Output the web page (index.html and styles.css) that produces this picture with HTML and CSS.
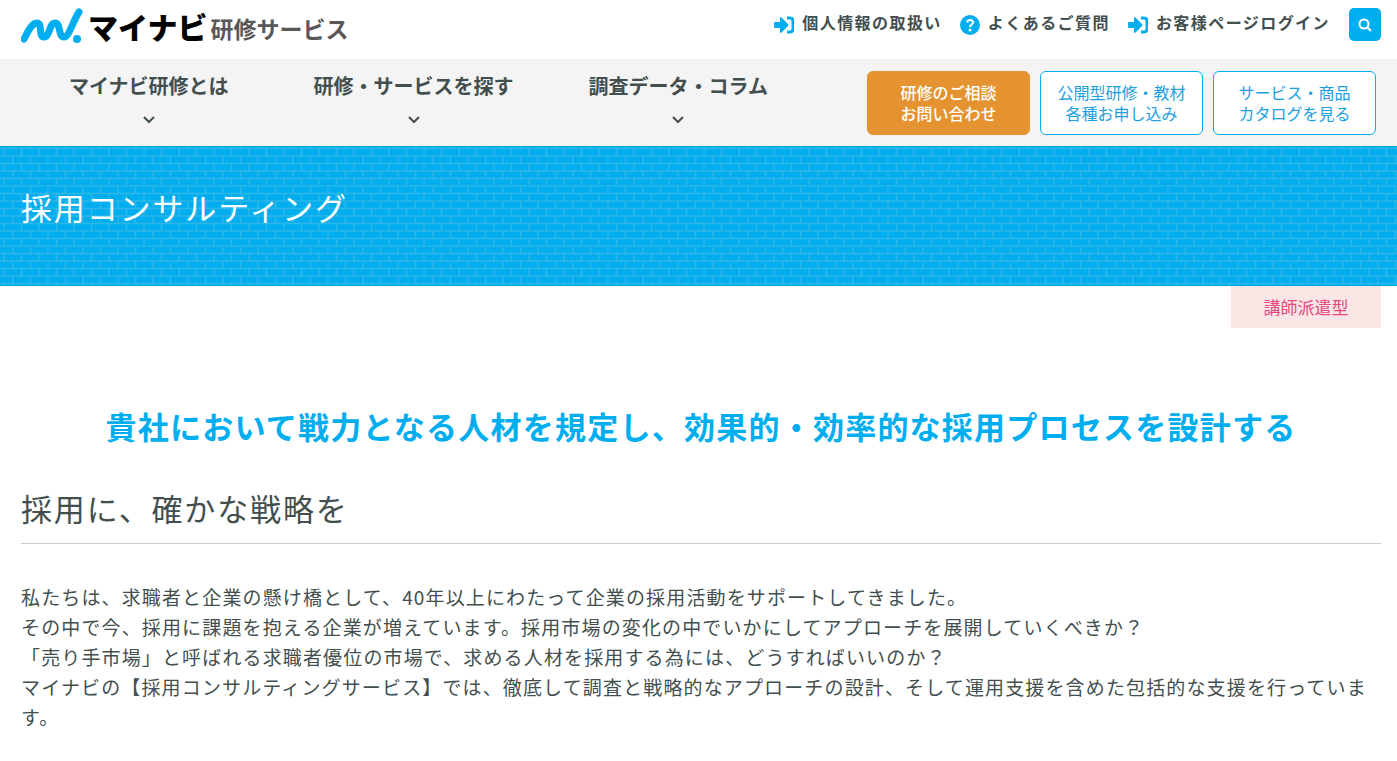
FILE: index.html
```html
<!DOCTYPE html>
<html lang="ja">
<head>
  <meta charset="UTF-8">
  <meta name="viewport" content="width=device-width, initial-scale=1.0">
  <title>採用コンサルティング | マイナビ研修サービス</title>
  <link rel="stylesheet" href="styles.css">
</head>
<body>
  <header>
    <div class="header-top">
      <a class="logo" href="#">
        <svg class="logo-mark" viewBox="0 0 62 36" aria-hidden="true">
          <path d="M3 31C7 23 11 15 16 15C22 15 17 29 23 29C29 29 28 15 34 15C40 15 37 29 43 29C48 29 51 15 58 4" />
          <circle cx="56" cy="31" r="4" />
        </svg>
        <span class="logo-name">マイナビ</span>
        <span class="logo-service">研修サービス</span>
      </a>
      <ul class="sub-links">
        <li><a href="#">
          <svg class="icon" viewBox="0 0 20 20" aria-hidden="true"><path class="fill" d="M0 8q0-1 1-1h5V3q0-1 1-1l7 7q1 1 0 2l-7 7q-1 0-1-1v-4H1q-1 0-1-1z" /><path class="line" d="M13 3h3q3 0 3 3v8q0 3-3 3h-3" /></svg>
          個人情報の取扱い</a></li>
        <li><a href="#">
          <svg class="icon" viewBox="0 0 20 20" aria-hidden="true"><circle class="fill" cx="10" cy="10" r="10" /><path class="mark" d="M7 7.500C7.500 4 13 4 13 7.500C13 9.500 10 9.500 10 12" /><circle class="mark-dot" cx="10" cy="15" r="1.500" /></svg>
          よくあるご質問</a></li>
        <li><a href="#">
          <svg class="icon" viewBox="0 0 20 20" aria-hidden="true"><path class="fill" d="M0 8q0-1 1-1h5V3q0-1 1-1l7 7q1 1 0 2l-7 7q-1 0-1-1v-4H1q-1 0-1-1z" /><path class="line" d="M13 3h3q3 0 3 3v8q0 3-3 3h-3" /></svg>
          お客様ページログイン</a></li>
      </ul>
      <button class="search-btn" type="button" aria-label="検索">
        <svg viewBox="0 0 14 14" aria-hidden="true"><circle cx="6" cy="6" r="4.500" /><path d="M9 9l4 4" /></svg>
      </button>
    </div>
    <div class="header-nav">
      <nav>
        <ul class="nav-list">
          <li><a href="#">マイナビ研修とは<svg viewBox="0 0 12 8" aria-hidden="true"><path d="M1 1l5 5 5-5" /></svg></a></li>
          <li><a href="#">研修・サービスを探す<svg viewBox="0 0 12 8" aria-hidden="true"><path d="M1 1l5 5 5-5" /></svg></a></li>
          <li><a href="#">調査データ・コラム<svg viewBox="0 0 12 8" aria-hidden="true"><path d="M1 1l5 5 5-5" /></svg></a></li>
        </ul>
      </nav>
      <div class="nav-buttons">
        <a class="btn btn-orange" href="#">研修のご相談<br>お問い合わせ</a>
        <a class="btn" href="#">公開型研修・教材<br>各種お申し込み</a>
        <a class="btn" href="#">サービス・商品<br>カタログを見る</a>
      </div>
    </div>
  </header>

  <div class="page-title">
    <h1>採用コンサルティング</h1>
  </div>

  <main>
    <p class="tag">講師派遣型</p>
    <p class="catch">貴社において戦力となる人材を規定し、効果的・効率的な採用プロセスを設計する</p>
    <h2>採用に、確かな戦略を</h2>
    <p class="text">私たちは、求職者と企業の懸け橋として、40年以上にわたって企業の採用活動をサポートしてきました。<br>
      その中で今、採用に課題を抱える企業が増えています。採用市場の変化の中でいかにしてアプローチを展開していくべきか？<br>
      「売り手市場」と呼ばれる求職者優位の市場で、求める人材を採用する為には、どうすればいいのか？<br>
      マイナビの【採用コンサルティングサービス】では、徹底して調査と戦略的なアプローチの設計、そして運用支援を含めた包括的な支援を行っています。</p>
  </main>
</body>
</html>
```
FILE: styles.css
```css
* {
  box-sizing: border-box;
}
body {
  margin: 0;
  font-family: "Noto Sans CJK JP", sans-serif;
  color: #434f4f;
  background: #fff;
}
a {
  color: inherit;
  text-decoration: none;
}
ul {
  list-style: none;
  margin: 0;
  padding: 0;
}
h1, h2, p {
  margin: 0;
}

/* header */
.header-top {
  display: flex;
  align-items: flex-start;
  height: 59px;
  padding: 8px 16px 0 21px;
}
.logo {
  display: flex;
  align-items: center;
  height: 36px;
  margin-right: auto;
  white-space: nowrap;
}
.logo-mark {
  width: 62px;
  height: 36px;
  margin-right: 5px;
}
.logo-mark path {
  fill: none;
  stroke: #00aeef;
  stroke-width: 7;
  stroke-linecap: round;
}
.logo-mark circle {
  fill: #00aeef;
}
.logo-name {
  font-size: 30px;
  font-weight: 900;
  color: #000;
}
.logo-service {
  margin-left: 3px;
  padding-top: 4px;
  font-size: 23px;
  font-weight: 700;
  color: #595757;
}
.sub-links {
  display: flex;
  gap: 18px;
  margin-right: 19px;
}
.sub-links a {
  display: flex;
  align-items: center;
  gap: 8px;
  height: 28px;
  font-size: 16px;
  font-weight: 700;
  letter-spacing: 0.09em;
  white-space: nowrap;
}
.icon {
  width: 20px;
  height: 20px;
  margin-top: 6px;
}
.icon .fill {
  fill: #00aeef;
}
.icon .line {
  fill: none;
  stroke: #00aeef;
  stroke-width: 3;
}
.icon .mark {
  fill: none;
  stroke: #fff;
  stroke-width: 2;
}
.icon .mark-dot {
  fill: #fff;
}
.search-btn {
  display: flex;
  align-items: center;
  justify-content: center;
  width: 32px;
  height: 33px;
  padding: 0;
  border: none;
  border-radius: 5px;
  background: #00aeef;
  cursor: pointer;
}
.search-btn svg {
  width: 14px;
  height: 14px;
  fill: none;
  stroke: #fff;
  stroke-width: 2;
}
.header-nav {
  display: flex;
  justify-content: space-between;
  padding: 12px 21px 11px 69px;
  background: #f4f4f4;
}
.nav-list {
  display: flex;
}
.nav-list li {
  margin-right: 75px;
}
.nav-list li:first-child {
  margin-right: 85px;
}
.nav-list a {
  display: flex;
  flex-direction: column;
  align-items: center;
  font-size: 20px;
  font-weight: 700;
  line-height: 30px;
  white-space: nowrap;
}
.nav-list svg {
  width: 12px;
  height: 8px;
  margin-top: 15px;
  fill: none;
  stroke: #434f4f;
  stroke-width: 2;
}
.nav-buttons {
  display: flex;
  gap: 10px;
}
.btn {
  width: 163px;
  height: 64px;
  padding-top: 10px;
  border: 1px solid #00aeef;
  border-radius: 6px;
  background: #fff;
  color: #1ba1e2;
  font-size: 16px;
  line-height: 21px;
  text-align: center;
}
.btn-orange {
  border-color: #e59330;
  background: #e59330;
  color: #fff;
  font-weight: 500;
}

/* page title with brick pattern */
.page-title {
  height: 140px;
  padding: 38px 21px;
  background: #00aeef url("data:image/svg+xml,%3Csvg xmlns='http://www.w3.org/2000/svg' width='35' height='15'%3E%3Cpath d='M0 2.500H35M0 10H35M4 3V10M21.500 3V10M13 11V15M13 0V2M30.500 11V15M30.500 0V2' stroke='%232fb5e6' stroke-width='1.500' fill='none'/%3E%3C/svg%3E");
}
.page-title h1 {
  color: #fff;
  font-size: 31px;
  font-weight: 400;
  line-height: 45px;
  letter-spacing: 0.06em;
}

/* content */
main {
  padding: 0 16px 28px 21px;
}
.tag {
  width: 150px;
  margin-left: auto;
  background: #fbe6e6;
  color: #e4487e;
  font-size: 17px;
  line-height: 42px;
  text-align: center;
}
.catch {
  margin-top: 75px;
  color: #00aeef;
  font-size: 31px;
  font-weight: 700;
  line-height: 45px;
  letter-spacing: 0.04em;
  text-align: center;
}
h2 {
  margin-top: 37px;
  padding-bottom: 13px;
  border-bottom: 1px solid #ccc;
  font-size: 31px;
  font-weight: 400;
  line-height: 45px;
  letter-spacing: 0.06em;
}
.text {
  margin-top: 38px;
  font-size: 19px;
  line-height: 30px;
  letter-spacing: 0.06em;
}
```
